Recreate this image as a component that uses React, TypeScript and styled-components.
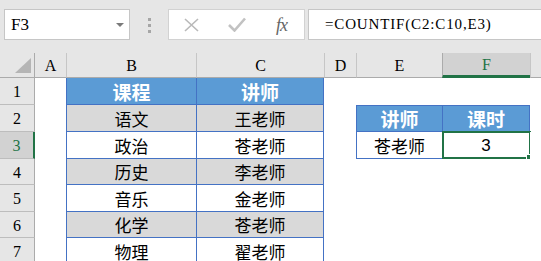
import styled, { createGlobalStyle } from "styled-components";

const GREEN = "#217346";
const HEAD = "#5b9bd5";
const LINE = "#4472c4";
const BAND = "#d9d9d9";

const GlobalStyle = createGlobalStyle`
  html, body {
    margin: 0;
    padding: 0;
  }
  body {
    background: #e6e6e6;
    overflow: hidden;
  }
`;

const Window = styled.div`
  width: 541px;
  height: 261px;
  overflow: hidden;
  display: flex;
  flex-direction: column;
  background: #e6e6e6;
`;

const Toolbar = styled.div`
  height: 53px;
  flex: none;
  box-sizing: border-box;
  display: flex;
  align-items: flex-start;
  padding: 9px 0 0 4px;
`;

const NameBox = styled.div`
  width: 126px;
  height: 31px;
  box-sizing: border-box;
  display: flex;
  align-items: center;
  justify-content: space-between;
  padding: 0 5px 0 6px;
  background: #fff;
  border: 1px solid #c6c6c6;
  font: 17px "Liberation Serif", serif;
  color: #000;
`;

const DropArrow = styled.span`
  width: 0;
  height: 0;
  border-left: 4px solid transparent;
  border-right: 4px solid transparent;
  border-top: 4px solid #7a7a7a;
`;

const Grip = styled.div`
  display: flex;
  flex-direction: column;
  gap: 3px;
  margin: 9px 17px 0 18px;
`;

const GripDot = styled.span`
  width: 3px;
  height: 3px;
  background: #a6a6a6;
`;

const ActionBox = styled.div`
  width: 137px;
  height: 31px;
  box-sizing: border-box;
  display: grid;
  grid-template-columns: repeat(3, 1fr);
  background: #fff;
  border: 1px solid #d2d2d2;
`;

const ActionButton = styled.span`
  display: flex;
  align-items: center;
  justify-content: center;
`;

const Fx = styled.span`
  font: italic 18px "Liberation Serif", serif;
  color: #666;
  letter-spacing: -1px;
  margin-top: 1px;
`;

const FormulaInput = styled.div`
  flex: 1;
  height: 31px;
  box-sizing: border-box;
  margin-left: 3px;
  display: flex;
  align-items: center;
  padding-left: 16px;
  background: #fff;
  border: 1px solid #c6c6c6;
  border-right: none;
  font: 15px "Liberation Serif", serif;
  letter-spacing: 0.85px;
  color: #000;
`;

const Sheet = styled.div`
  flex: 1;
  overflow: hidden;
  display: grid;
  grid-template-columns: 35px 31px 130px 128px 32px 86px 88px 88px;
  grid-template-rows: 25px 27px 27px 27px 26px 27px 26px 27px;
  background: #fff;
`;

const Corner = styled.div`
  box-sizing: border-box;
  display: flex;
  align-items: flex-end;
  justify-content: flex-end;
  padding: 0 3px 4px 0;
  background: #e6e6e6;
  border-right: 1px solid #ababab;
  border-bottom: 1px solid #ababab;
`;

const ColHeader = styled.div<{ $divider?: boolean; $selected?: boolean }>`
  box-sizing: border-box;
  display: flex;
  align-items: center;
  justify-content: center;
  padding-top: 2px;
  font: 16px "Liberation Serif", serif;
  color: ${(p) => (p.$selected ? GREEN : "#000")};
  background: ${(p) => (p.$selected ? "#d2d2d2" : "#e6e6e6")};
  border-left: ${(p) =>
    p.$divider ? `1px solid ${p.$selected ? "#ababab" : "#c6c6c6"}` : "none"};
  border-bottom: ${(p) =>
    p.$selected ? `3px solid ${GREEN}` : "1px solid #ababab"};
`;

const RowHeader = styled.div<{ $selected?: boolean }>`
  box-sizing: border-box;
  display: flex;
  align-items: center;
  justify-content: center;
  padding-top: 2px;
  font: 16px "Liberation Serif", serif;
  color: ${(p) => (p.$selected ? GREEN : "#000")};
  background: ${(p) => (p.$selected ? "#d2d2d2" : "#e6e6e6")};
  border-right: ${(p) =>
    p.$selected ? `2px solid ${GREEN}` : "1px solid #ababab"};
  border-bottom: 1px solid #bdbdbd;
`;

type Fill = "none" | "head" | "band";

const fills: Record<Fill, string> = {
  none: "#fff",
  head: HEAD,
  band: BAND,
};

const Cell = styled.div<{
  $fill?: Fill;
  $l?: boolean;
  $r?: boolean;
  $t?: boolean;
  $b?: boolean;
  $num?: boolean;
}>`
  box-sizing: border-box;
  position: relative;
  display: flex;
  align-items: center;
  justify-content: center;
  line-height: 1;
  background: ${(p) => fills[p.$fill ?? "none"]};
  color: ${(p) => (p.$fill === "head" ? "#fff" : "#000")};
  font-family: ${(p) =>
    p.$num
      ? `"Liberation Sans", sans-serif`
      : `"Noto Sans CJK SC", sans-serif`};
  font-size: ${(p) => (p.$fill === "head" ? 19 : 17)}px;
  font-weight: ${(p) => (p.$fill === "head" ? 700 : 400)};
  border-left: ${(p) => (p.$l ? `1px solid ${LINE}` : "none")};
  border-right: ${(p) => (p.$r ? `1px solid ${LINE}` : "none")};
  border-top: ${(p) => (p.$t ? `1px solid ${LINE}` : "none")};
  border-bottom: ${(p) => (p.$b ? `1px solid ${LINE}` : "none")};
`;

const Selection = styled.span`
  position: absolute;
  top: -1px;
  left: -1px;
  right: -2px;
  bottom: -1px;
  border: 2px solid ${GREEN};
  pointer-events: none;
`;

const FillHandle = styled.span`
  position: absolute;
  right: -4px;
  bottom: -4px;
  width: 5px;
  height: 5px;
  background: ${GREEN};
  border: 1px solid #fff;
`;

type CellSpec = {
  text?: string;
  fill?: Fill;
  l?: boolean;
  r?: boolean;
  t?: boolean;
  b?: boolean;
  num?: boolean;
  selected?: boolean;
};

const columns = ["A", "B", "C", "D", "E", "F", "G"];

const courses: [string, string][] = [
  ["课程", "讲师"],
  ["语文", "王老师"],
  ["政治", "苍老师"],
  ["历史", "李老师"],
  ["音乐", "金老师"],
  ["化学", "苍老师"],
  ["物理", "翟老师"],
];

function rowCells(index: number): CellSpec[] {
  const [course, teacher] = courses[index];
  const fill: Fill = index === 0 ? "head" : index % 2 === 1 ? "band" : "none";
  const cells: CellSpec[] = [
    {},
    { text: course, fill, l: true, b: true },
    { text: teacher, fill, l: true, r: true, b: true },
    {},
    {},
    {},
    {},
  ];
  if (index === 1) {
    cells[4] = { text: "讲师", fill: "head", l: true, t: true, b: true };
    cells[5] = { text: "课时", fill: "head", l: true, r: true, t: true, b: true };
  }
  if (index === 2) {
    cells[4] = { text: "苍老师", l: true, b: true };
    cells[5] = { text: "3", l: true, r: true, b: true, num: true, selected: true };
  }
  return cells;
}

function CloseIcon() {
  return (
    <svg width="15" height="14" viewBox="0 0 15 14">
      <path d="M1 1 L14 13 M14 1 L1 13" stroke="#b9b9b9" strokeWidth="1.6" fill="none" />
    </svg>
  );
}

function CheckIcon() {
  return (
    <svg width="18" height="15" viewBox="0 0 18 15">
      <path d="M1 8 L6.5 13.5 L17 1.5" stroke="#c2c2c2" strokeWidth="2.6" fill="none" />
    </svg>
  );
}

export default function App() {
  return (
    <Window>
      <GlobalStyle />
      <Toolbar>
        <NameBox>
          F3
          <DropArrow />
        </NameBox>
        <Grip>
          <GripDot />
          <GripDot />
          <GripDot />
        </Grip>
        <ActionBox>
          <ActionButton>
            <CloseIcon />
          </ActionButton>
          <ActionButton>
            <CheckIcon />
          </ActionButton>
          <ActionButton>
            <Fx>fx</Fx>
          </ActionButton>
        </ActionBox>
        <FormulaInput>=COUNTIF(C2:C10,E3)</FormulaInput>
      </Toolbar>
      <Sheet>
        <Corner>
          <svg width="16" height="15" viewBox="0 0 16 15">
            <polygon points="16,0 16,15 0,15" fill="#b5b5b5" />
          </svg>
        </Corner>
        {columns.map((c, i) => (
          <ColHeader key={c} $divider={i > 0} $selected={c === "F"}>
            {c}
          </ColHeader>
        ))}
        {courses.map((_, r) => [
          <RowHeader key={`h${r}`} $selected={r === 2}>
            {r + 1}
          </RowHeader>,
          ...rowCells(r).map((cell, ci) => (
            <Cell
              key={`${r}-${ci}`}
              $fill={cell.fill}
              $l={cell.l}
              $r={cell.r}
              $t={cell.t}
              $b={cell.b}
              $num={cell.num}
            >
              {cell.text}
              {cell.selected && (
                <Selection>
                  <FillHandle />
                </Selection>
              )}
            </Cell>
          )),
        ])}
      </Sheet>
    </Window>
  );
}
